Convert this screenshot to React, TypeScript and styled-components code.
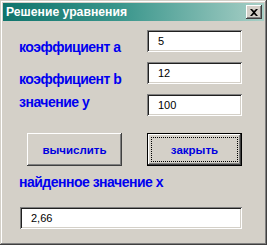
import React from "react";
import styled, { createGlobalStyle } from "styled-components";

const Global = createGlobalStyle`
  html, body { margin: 0; padding: 0; background: #d4d0c8; }
  * { box-sizing: border-box; }
`;

const Window = styled.div`
  width: 267px;
  height: 245px;
  padding: 3px;
  background: #d4d0c8;
  display: flex;
  flex-direction: column;
  box-shadow: inset -1px -1px #404040, inset 1px 1px #d4d0c8,
    inset -2px -2px #808080, inset 2px 2px #ffffff;
`;

const TitleBar = styled.div`
  height: 18px;
  display: flex;
  align-items: center;
  justify-content: space-between;
  padding: 0 2px 0 3px;
  background: linear-gradient(90deg, #0f746c 0%, #3a968c 45%, #a8cfc6 100%);
`;

const Title = styled.span`
  font-family: "Liberation Sans", Arial, sans-serif;
  font-weight: bold;
  font-size: 12.2px;
  color: #ffffff;
  white-space: nowrap;
`;

const CloseButton = styled.div`
  width: 16px;
  height: 14px;
  background: #d4d0c8;
  display: flex;
  align-items: center;
  justify-content: center;
  box-shadow: inset -1px -1px #404040, inset 1px 1px #ffffff,
    inset -2px -2px #808080, inset 2px 2px #d4d0c8;
`;

const Client = styled.div`
  display: flex;
  flex-direction: column;
  align-items: flex-start;
  padding: 9px 0 0 16px;
`;

const Fields = styled.div`
  display: grid;
  grid-template-columns: 128px 95px;
  grid-auto-rows: 22px;
  row-gap: 10px;
`;

const Label = styled.div<{ $drop?: number }>`
  font-family: "Liberation Sans", Arial, sans-serif;
  font-weight: bold;
  font-size: 14px;
  line-height: 16px;
  letter-spacing: -0.5px;
  color: #0000f0;
  white-space: nowrap;
  margin-top: ${(p) => p.$drop ?? 0}px;
`;

const Field = styled.div<{ $width?: number }>`
  width: ${(p) => p.$width ?? 95}px;
  height: 22px;
  background: #ffffff;
  display: flex;
  align-items: center;
  padding-left: 11px;
  font-family: "Liberation Sans", Arial, sans-serif;
  font-size: 11px;
  color: #000000;
  box-shadow: inset 1px 1px #808080, inset -1px -1px #ffffff,
    inset 2px 2px #202020, inset -2px -2px #d4d0c8;
`;

const Buttons = styled.div`
  display: flex;
  gap: 25px;
  margin: 17px 0 0 8px;
`;

const Button = styled.div<{ $default?: boolean }>`
  width: 95px;
  height: 33px;
  background: #d4d0c8;
  display: flex;
  align-items: center;
  justify-content: center;
  font-family: "Liberation Sans", Arial, sans-serif;
  font-weight: bold;
  font-size: 11.5px;
  color: #0000e0;
  position: relative;
  border: ${(p) => (p.$default ? "1px solid #000" : "none")};
  box-shadow: inset -1px -1px #404040, inset 1px 1px #ffffff,
    inset -2px -2px #808080, inset 2px 2px #d4d0c8;
`;

const Focus = styled.div`
  position: absolute;
  inset: 3px;
  border: 1px dotted #000000;
`;

const ResultLabel = styled(Label)`
  margin-top: 8px;
`;

const ResultField = styled(Field)`
  margin: 17px 0 0 1px;
`;

export default function App() {
  return (
    <>
      <Global />
      <Window>
        <TitleBar>
          <Title>Решение уравнения</Title>
          <CloseButton>
            <svg width="8" height="7" viewBox="0 0 8 7">
              <path d="M0 0h2l2 2 2-2h2L5 3.5 8 7H6L4 5 2 7H0l3-3.5z" fill="#000" />
            </svg>
          </CloseButton>
        </TitleBar>
        <Client>
          <Fields>
            <Label $drop={9}>коэффициент a</Label>
            <Field>5</Field>
            <Label $drop={9}>коэффициент b</Label>
            <Field>12</Field>
            <Label $drop={0}>значение y</Label>
            <Field>100</Field>
          </Fields>
          <Buttons>
            <Button>вычислить</Button>
            <Button $default>
              <Focus />
              закрыть
            </Button>
          </Buttons>
          <ResultLabel>найденное значение x</ResultLabel>
          <ResultField $width={222}>2,66</ResultField>
        </Client>
      </Window>
    </>
  );
}
